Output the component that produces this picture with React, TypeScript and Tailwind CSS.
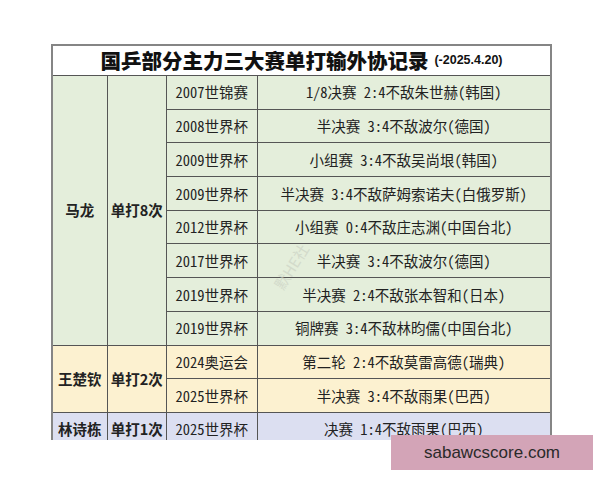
const cjk = "font-['Noto_Sans_Mono_CJK_SC','Noto_Sans_CJK_SC',sans-serif]";

type Group = {
  name: string;
  count: string;
  bg: string;
  span: string;
  rows: [string, string][];
};

const groups: Group[] = [
  {
    name: "马龙",
    count: "单打8次",
    bg: "bg-[#e4eedb]",
    span: "row-span-8",
    rows: [
      ["2007世锦赛", "1/8决赛 2:4不敌朱世赫(韩国)"],
      ["2008世界杯", "半决赛 3:4不敌波尔(德国)"],
      ["2009世界杯", "小组赛 3:4不敌吴尚垠(韩国)"],
      ["2009世界杯", "半决赛 3:4不敌萨姆索诺夫(白俄罗斯)"],
      ["2012世界杯", "小组赛 0:4不敌庄志渊(中国台北)"],
      ["2017世界杯", "半决赛 3:4不敌波尔(德国)"],
      ["2019世界杯", "半决赛 2:4不敌张本智和(日本)"],
      ["2019世界杯", "铜牌赛 3:4不敌林昀儒(中国台北)"],
    ],
  },
  {
    name: "王楚钦",
    count: "单打2次",
    bg: "bg-[#fcf1d0]",
    span: "row-span-2",
    rows: [
      ["2024奥运会", "第二轮 2:4不敌莫雷高德(瑞典)"],
      ["2025世界杯", "半决赛 3:4不敌雨果(巴西)"],
    ],
  },
  {
    name: "林诗栋",
    count: "单打1次",
    bg: "bg-[#dcdff1]",
    span: "row-span-1",
    rows: [["2025世界杯", "决赛 1:4不敌雨果(巴西)"]],
  },
];

export default function App() {
  return (
    <div className="relative w-[600px] h-[480px] bg-white overflow-hidden">
      <div className="ml-[51px] mt-[44px] w-[501px] h-[396px] overflow-hidden border-2 border-b-0 border-[#858585] flex flex-col">
        <div className="h-[30px] shrink-0 flex items-center justify-center border-b border-[#555] bg-white">
          <span className="font-['Noto_Sans_CJK_SC',sans-serif] font-black text-[20.5px] leading-none text-[#111]">
            国乒部分主力三大赛单打输外协记录
          </span>
          <span className="ml-[6px] font-['Liberation_Sans',sans-serif] font-bold text-[12.5px] text-[#111]">
            (-2025.4.20)
          </span>
        </div>
        <div className="grid grid-cols-[53.5px_58.5px_89.5px_1fr] auto-rows-[32.7px] gap-px bg-[#555] text-[#222]">
          {groups.map((g) => [
            <div
              key={g.name + "n"}
              className={`${g.span} ${g.bg} flex items-center justify-center font-['Noto_Sans_CJK_SC',sans-serif] font-bold text-[14.5px]`}
            >
              {g.name}
            </div>,
            <div
              key={g.name + "c"}
              className={`${g.span} ${g.bg} flex items-center justify-center font-['Noto_Sans_CJK_SC',sans-serif] font-bold text-[14.5px]`}
            >
              {g.count}
            </div>,
            ...g.rows.flatMap(([ev, res], i) => [
              <div
                key={g.name + i + "e"}
                className={`col-start-3 ${g.bg} flex items-center justify-center ${cjk} text-[14.5px]`}
              >
                {ev}
              </div>,
              <div
                key={g.name + i + "r"}
                className={`${g.bg} flex items-center justify-center ${cjk} text-[14.5px] whitespace-pre`}
              >
                {res}
              </div>,
            ]),
          ])}
        </div>
      </div>

      {/* faint watermark over the table */}
      <div className="absolute left-[266px] top-[259px] -rotate-[58deg] font-['Noto_Sans_CJK_SC',sans-serif] text-[15px] leading-none text-[#c9cfc2] opacity-60 select-none">
        默HE社
      </div>

      <div className="absolute left-[391px] top-[435px] w-[202px] h-[35px] bg-[#d3a4b7] flex items-center justify-center">
        <span className="font-['Liberation_Sans',sans-serif] text-[17px] text-[#2a2a2a]">
          sabawcscore.com
        </span>
      </div>
    </div>
  );
}
